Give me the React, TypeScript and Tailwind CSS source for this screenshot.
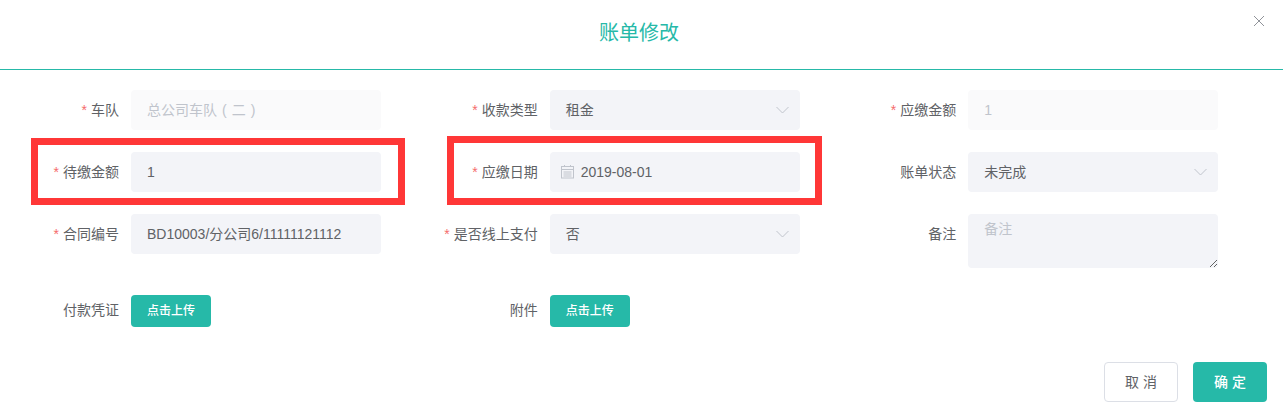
/**
 * 账单修改ダイアログ（スクリーンショット再現）
 */
import type { ReactNode } from "react";

const FONT = "font-['Liberation_Sans','Noto_Sans_CJK_SC',sans-serif]";

function Field({ label, required, children }: { label: string; required?: boolean; children: ReactNode }) {
  return (
    <div className="flex items-start">
      <label className="w-[104px] h-10 mr-3 shrink-0 flex items-center justify-end text-sm text-[#606266]">
        {required && <span className="mr-1 text-[#f56c6c]">*</span>}
        {label}
      </label>
      <div className="w-[250px]">{children}</div>
    </div>
  );
}

function TextBox({ children, disabled }: { children: ReactNode; disabled?: boolean }) {
  return (
    <div
      className={`h-10 rounded px-4 flex items-center text-sm ${
        disabled ? "bg-[#fafafb] text-[#c0c4cc]" : "bg-[#f3f4f8] text-[#606266]"
      }`}
    >
      <span>{children}</span>
    </div>
  );
}

function SelectBox({ value }: { value: string }) {
  return (
    <div className="h-10 rounded pl-4 pr-[11px] flex items-center justify-between bg-[#f3f4f8] text-sm text-[#606266]">
      <span>{value}</span>
      <svg width="13" height="14" viewBox="0 0 13 14" fill="none" stroke="#c0c4cc" strokeWidth="1">
        <path d="M0.5 4 L6.5 10 L12.5 4" />
      </svg>
    </div>
  );
}

function DateBox({ value }: { value: string }) {
  return (
    <div className="h-10 rounded pl-[11px] flex items-center gap-[6px] bg-[#f3f4f8] text-sm text-[#606266]">
      <svg width="14" height="14" viewBox="0 0 14 14" fill="none" stroke="#c0c4cc" strokeWidth="1">
        <rect x="0.5" y="1.5" width="12" height="11.5" />
        <path d="M0.5 4.5 H12.5 M3.5 0 V2 M9.5 0 V2 M2.5 7 H10.5 M2.5 9 H10.5 M2.5 11 H10.5" />
      </svg>
      <span>{value}</span>
    </div>
  );
}

function UploadButton() {
  return (
    <button type="button" className="mt-[5px] w-20 h-8 rounded bg-[#26b9a8] text-xs font-medium text-white flex items-center justify-center">
      点击上传
    </button>
  );
}

export default function App() {
  return (
    <div className={`relative w-[1283px] h-[414px] overflow-hidden bg-white ${FONT}`}>
      <header className="h-[69px] pr-[5px] pb-[4px] flex items-center justify-center text-xl font-normal text-[#26b9a8]">账单修改</header>
      <button type="button" className="absolute top-4 left-[1254px] text-[#909399]" aria-label="关闭">
        <svg className="block" width="10" height="10" viewBox="0 0 10 10" fill="none" stroke="currentColor" strokeWidth="1">
          <path d="M0 0 L10 10 M10 0 L0 10" />
        </svg>
      </button>
      <div className="h-px bg-[#26b9a8]" />

      <div className="pt-5 pl-[15px] grid grid-cols-[repeat(3,418.67px)] auto-rows-min gap-y-[22px]">
        <Field label="车队" required>
          <TextBox disabled>
            总公司车队<span className="mx-[5px]">(</span>二<span className="ml-[5px]">)</span>
          </TextBox>
        </Field>
        <Field label="收款类型" required><SelectBox value="租金" /></Field>
        <Field label="应缴金额" required><TextBox disabled>1</TextBox></Field>

        <Field label="待缴金额" required><TextBox>1</TextBox></Field>
        <Field label="应缴日期" required><DateBox value="2019-08-01" /></Field>
        <Field label="账单状态"><SelectBox value="未完成" /></Field>

        <Field label="合同编号" required><TextBox>BD10003/分公司6/11111121112</TextBox></Field>
        <Field label="是否线上支付" required><SelectBox value="否" /></Field>
        <Field label="备注">
          <textarea
            placeholder="备注"
            className="block w-full h-[54px] rounded bg-[#f3f4f8] px-4 py-[5px] text-sm text-[#606266] placeholder:text-[#c0c4cc] outline-none"
          />
        </Field>

        <Field label="付款凭证"><UploadButton /></Field>
        <Field label="附件"><UploadButton /></Field>
      </div>

      <footer className="mt-8 pr-4 flex justify-end gap-[15px]">
        <button type="button" className="w-[74px] h-10 rounded border border-[#dcdfe6] bg-white text-sm text-[#606266]">取 消</button>
        <button type="button" className="w-[74px] h-10 rounded bg-[#26b9a8] text-sm font-medium text-white">确 定</button>
      </footer>

      {/* 赤枠の注記（画面の上に重ねた強調） */}
      <div className="absolute left-[31px] top-[138px] w-[374px] h-[67px] border-[7px] border-[#ff3737]" />
      <div className="absolute left-[447px] top-[136px] w-[375px] h-[69px] border-[7px] border-[#ff3737]" />
    </div>
  );
}
